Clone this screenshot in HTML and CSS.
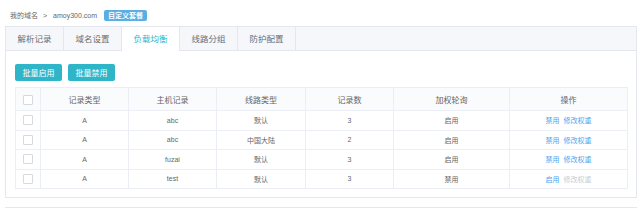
FILE: index.html
```html
<!DOCTYPE html>
<html lang="zh-CN">
<head>
<meta charset="utf-8">
<link rel="stylesheet" href="styles.css">
</head>
<body>
<div class="crumb">
  <span class="crumb-item">我的域名</span>
  <span class="crumb-sep">&gt;</span>
  <span class="crumb-item">amoy300.com</span>
  <span class="badge">自定义套餐</span>
</div>
<div class="panel">
  <div class="tabs">
    <div class="tab">解析记录</div>
    <div class="tab">域名设置</div>
    <div class="tab active">负载均衡</div>
    <div class="tab">线路分组</div>
    <div class="tab">防护配置</div>
  </div>
  <div class="content">
    <div class="actions">
      <button class="btn">批量启用</button>
      <button class="btn">批量禁用</button>
    </div>
    <table class="grid">
      <colgroup>
        <col class="c0"><col class="c1"><col class="c2"><col class="c3"><col class="c4"><col class="c5"><col class="c6">
      </colgroup>
      <thead>
        <tr><th><span class="cb"></span></th><th>记录类型</th><th>主机记录</th><th>线路类型</th><th>记录数</th><th>加权轮询</th><th>操作</th></tr>
      </thead>
      <tbody>
        <tr><td><span class="cb"></span></td><td>A</td><td>abc</td><td>默认</td><td>3</td><td>启用</td><td><a class="lk">禁用</a><a class="lk">修改权重</a></td></tr>
        <tr><td><span class="cb"></span></td><td>A</td><td>abc</td><td>中国大陆</td><td>2</td><td>启用</td><td><a class="lk">禁用</a><a class="lk">修改权重</a></td></tr>
        <tr><td><span class="cb"></span></td><td>A</td><td>fuzai</td><td>默认</td><td>3</td><td>启用</td><td><a class="lk">禁用</a><a class="lk">修改权重</a></td></tr>
        <tr><td><span class="cb"></span></td><td>A</td><td>test</td><td>默认</td><td>3</td><td>禁用</td><td><a class="lk">启用</a><a class="lk off">修改权重</a></td></tr>
      </tbody>
    </table>
  </div>
</div>
<div class="next"></div>
</body>
</html>
```
FILE: styles.css
```css
html, body {
  margin: 0;
  padding: 0;
  background: #fff;
}
body {
  font-family: "Liberation Sans", "Noto Sans CJK SC", sans-serif;
  color: #666;
  width: 643px;
  height: 209px;
  overflow: hidden;
}
.crumb {
  display: flex;
  align-items: center;
  height: 12px;
  padding: 9px 0 0 10px;
  font-size: 7px;
  color: #666;
}
.crumb-sep {
  margin: 0 6px 0 5px;
  font-size: 7px;
}
.badge {
  margin-left: 7px;
  background: #5aaee2;
  color: #fff;
  font-size: 7px;
  font-weight: bold;
  height: 11px;
  line-height: 11px;
  padding: 0 4px;
  border-radius: 2px;
}
.panel {
  margin: 5px 6px 0 5px;
  border: 1px solid #e4e7ed;
  height: 172px;
  box-sizing: border-box;
}
.tabs {
  display: flex;
  height: 24px;
  background: #f5f7fa;
  border-bottom: 1px solid #e4e7ed;
  box-sizing: border-box;
}
.tab {
  width: 58px;
  box-sizing: border-box;
  border-right: 1px solid #e4e7ed;
  font-size: 8.5px;
  line-height: 23px;
  text-align: center;
  color: #6b6e73;
  font-family: "Noto Sans CJK SC", sans-serif;
}
.tab.active {
  background: #fff;
  color: #2fb5c8;
  height: 24px;
}
.content {
  padding: 13px 9px 0 9px;
}
.actions {
  display: flex;
  gap: 6px;
  margin-bottom: 6px;
}
.btn {
  width: 47px;
  height: 17px;
  padding: 0;
  border: none;
  border-radius: 2px;
  background: #2fb5c8;
  color: #fff;
  font-family: "Noto Sans CJK SC", sans-serif;
  font-size: 8px;
  line-height: 17px;
}
.grid {
  width: 612px;
  border-collapse: collapse;
  table-layout: fixed;
  font-size: 7px;
  font-family: "Liberation Sans", "Noto Sans CJK SC", sans-serif;
}
.c0 { width: 25px; }
.c1 { width: 88px; }
.c2 { width: 88px; }
.c3 { width: 89px; }
.c4 { width: 88px; }
.c5 { width: 116px; }
.c6 { width: 118px; }
.grid th, .grid td {
  border: 1px solid #ebeef5;
  text-align: center;
  padding: 0;
  color: #666;
}
.grid th {
  height: 22px;
  font-weight: normal;
  font-size: 8px;
  font-family: "Noto Sans CJK SC", sans-serif;
  background: #fafbfd;
}
.grid td {
  height: 18.5px;
}
.cb {
  display: inline-block;
  width: 8px;
  height: 8px;
  border: 1px solid #d6d9de;
  border-radius: 1px;
  background: #fff;
  vertical-align: middle;
}
.lk {
  color: #4fa3ef;
  font-family: "Noto Sans CJK SC", sans-serif;
}
.lk + .lk {
  margin-left: 4px;
}
.lk.off {
  color: #c9ccd0;
}
.next {
  margin: 9px 6px 0 5px;
  border-top: 1px solid #e4e7ed;
}
```
